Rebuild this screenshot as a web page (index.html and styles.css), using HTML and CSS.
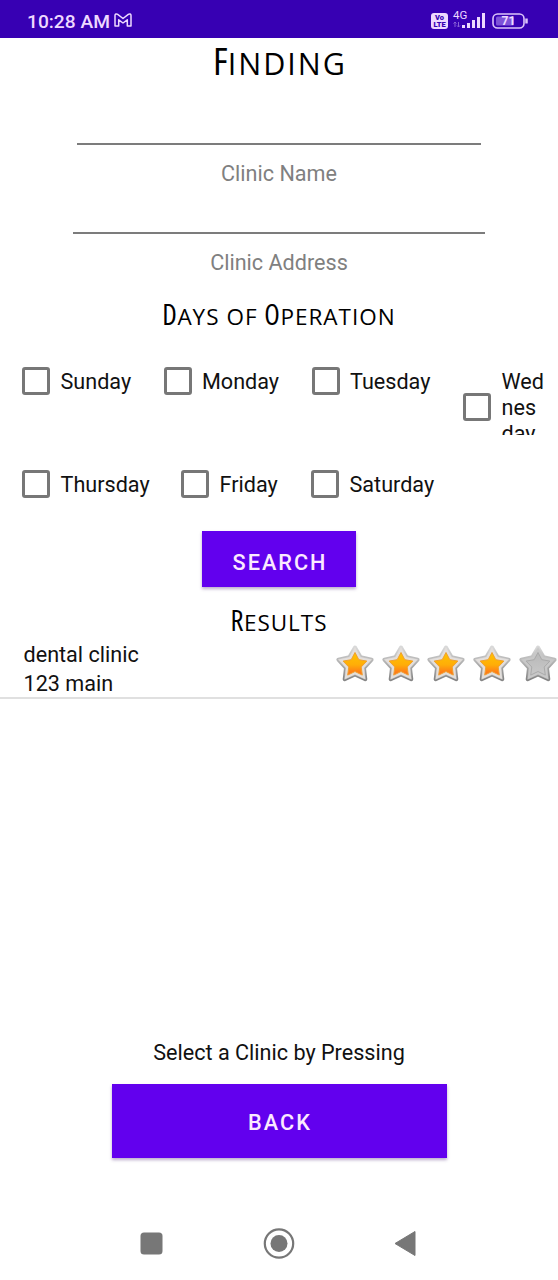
FILE: index.html
```html
<!DOCTYPE html>
<html lang="en">
<head>
  <meta charset="UTF-8">
  <meta name="viewport" content="width=device-width, initial-scale=1.0">
  <title>Finding</title>
  <link rel="stylesheet" href="styles.css">
</head>
<body>

  <div class="status-bar">
    <span class="time">10:28 AM</span>
    <svg class="mail-icon" width="20" height="16" viewBox="0 0 20 16">
      <path d="M2 14V3.500C2 2 3.500 1.500 4.700 2.400L10 6.500L15.300 2.400C16.500 1.500 18 2 18 3.500V14H14.300V7.800L10 11L5.700 7.800V14Z" fill="none" stroke="#eed9ff" stroke-width="1.5" stroke-linejoin="round"/>
    </svg>
    <div class="status-right">
      <div class="volte"><span>Vo</span><span>LTE</span></div>
      <div class="signal">
        <span class="network">4G</span>
        <svg width="33" height="18" viewBox="0 0 33 18">
          <path d="M2 16V11M0.500 12.500L2 11L3.500 12.500M5.500 11V16M4 14.500L5.500 16L7 14.500" stroke="#8a62d8" fill="none"/>
          <path d="M10.500 17v-3M15.500 17v-5M20.500 17v-8M25.500 17v-11M30.500 17v-15" stroke="#eed9ff" stroke-width="3"/>
        </svg>
      </div>
      <svg class="battery" width="37" height="16" viewBox="0 0 37 16">
        <rect x="1" y="1" width="31" height="14" rx="4.500" fill="none" stroke="#dcc4fa" stroke-width="1.6"/>
        <rect x="4" y="3.500" width="18" height="9" rx="1.500" fill="#7e52d8"/>
        <path d="M34.500 5.500v5" stroke="#dcc4fa" stroke-width="2.500"/>
        <text x="16.500" y="12.300" text-anchor="middle" class="battery-text">71</text>
      </svg>
    </div>
  </div>

  <h1><span class="cap">F</span>inding</h1>

  <div class="field field-name"></div>
  <p class="field-label">Clinic Name</p>
  <div class="field field-address"></div>
  <p class="field-label">Clinic Address</p>

  <h2 class="days-title"><span class="cap">D</span>ays of <span class="cap">O</span>peration</h2>

  <div class="days">
    <label class="day sunday"><i class="box"></i><span>Sunday</span></label>
    <label class="day monday"><i class="box"></i><span>Monday</span></label>
    <label class="day tuesday"><i class="box"></i><span>Tuesday</span></label>
    <label class="day wednesday"><i class="box"></i><span>Wed<br>nes<br>day</span></label>
  </div>
  <div class="days days-second">
    <label class="day thursday"><i class="box"></i><span>Thursday</span></label>
    <label class="day friday"><i class="box"></i><span>Friday</span></label>
    <label class="day saturday"><i class="box"></i><span>Saturday</span></label>
  </div>

  <button class="btn btn-search">SEARCH</button>

  <h2 class="results-title"><span class="cap">R</span>esults</h2>

  <div class="result">
    <div class="result-text">
      <p>dental clinic</p>
      <p>123 main</p>
    </div>
    <div class="rating" id="rating"></div>
  </div>

  <div class="list-space"></div>

  <p class="hint">Select a Clinic by Pressing</p>
  <button class="btn btn-back">BACK</button>

  <div class="nav-bar">
    <svg width="280" height="34" viewBox="0 0 280 34">
      <rect x="1.500" y="5.500" width="22" height="22" rx="3.500" fill="#777"/>
      <circle cx="140" cy="16.500" r="14.200" fill="none" stroke="#777" stroke-width="2.200"/>
      <circle cx="140" cy="16.500" r="8.500" fill="#777"/>
      <path d="M256 16.500L276 4.500V28.500Z" fill="#777" stroke="#777" stroke-width="1" stroke-linejoin="round"/>
    </svg>
  </div>

  <svg width="0" height="0" class="defs">
    <defs>
      <linearGradient id="rim" x1="0" y1="0" x2="0" y2="1">
        <stop offset="0" stop-color="#d8d8d8"/>
        <stop offset="1" stop-color="#858585"/>
      </linearGradient>
      <linearGradient id="gold" x1="0" y1="0" x2="0" y2="1">
        <stop offset="0" stop-color="#ffc400"/>
        <stop offset="0.550" stop-color="#ffad08"/>
        <stop offset="1" stop-color="#ff6a1c"/>
      </linearGradient>
      <linearGradient id="grey" x1="0" y1="0" x2="0" y2="1">
        <stop offset="0" stop-color="#b8b8b8"/>
        <stop offset="1" stop-color="#c8c8c8"/>
      </linearGradient>
    </defs>
  </svg>

  <script>
    const score = 4;
    const star = 'M20 3.5L25.6 13.3L36.6 15.6L29 23.9L30.3 35.2L20 30.5L9.7 35.2L11 23.9L3.4 15.6L14.4 13.3Z';
    const inner = 'M20 8.5L23.8 15.7L31.9 17.1L26.2 23L27.3 31.1L20 27.5L12.7 31.1L13.8 23L8.1 17.1L16.2 15.7Z';
    let html = '';

    for (let i = 0; i < 5; i++) {
      const on = i < score;
      html += `
        <svg viewBox="0 0 40 40">
          <path d="${star}" fill="url(#rim)" stroke="url(#rim)" stroke-width="4" stroke-linejoin="round"/>
          <path d="${star}" fill="${on ? '#e3dfdc' : '#c8c8c8'}" stroke="${on ? '#e3dfdc' : '#c8c8c8'}" stroke-width="0.5" stroke-linejoin="round"/>
          <path d="${inner}" fill="url(#${on ? 'gold' : 'grey'})" stroke="${on ? '#f0a030' : '#aaa'}" stroke-width="1" stroke-linejoin="round"/>
        </svg>`;
    }
    document.getElementById('rating').innerHTML = html;
  </script>

</body>
</html>
```

FILE: styles.css
```css
* {
  box-sizing: border-box;
}

body {
  margin: 0;
  width: 558px;
  height: 1280px;
  display: flex;
  flex-direction: column;
  align-items: center;
  overflow: hidden;
  background-color: #fff;
  color: #111;
  font-family: Roboto, "Liberation Sans", sans-serif;
  font-size: 21.6px;
}

h1, h2, p {
  margin: 0;
  flex-shrink: 0;
  font-weight: normal;
}

/* status bar */
.status-bar {
  width: 100%;
  height: 38px;
  flex-shrink: 0;
  display: flex;
  align-items: center;
  padding: 5px 29px 0 27px;
  background-color: #3700b3;
  color: #eed9ff;
}

.time {
  font-size: 19.2px;
  font-weight: 500;
  line-height: 24px;
}

.mail-icon {
  margin: -3px 0 0 3px;
}

.status-right {
  display: flex;
  align-items: center;
  margin-left: auto;
  margin-top: -2px;
}

.volte {
  width: 17px;
  height: 16px;
  border-radius: 3px;
  background-color: #eed9ff;
  color: #3700b3;
  display: flex;
  flex-direction: column;
  align-items: center;
  justify-content: center;
  font-size: 7.5px;
  font-weight: 900;
  line-height: 7px;
}

.signal {
  position: relative;
  width: 33px;
  height: 18px;
  margin: -1px 6px 0 5px;
}

.network {
  position: absolute;
  left: 0;
  top: -1px;
  font-size: 11.5px;
  line-height: 11px;
}

.signal svg {
  display: block;
}

.battery-text {
  font-size: 12px;
  font-weight: 700;
  fill: #eed9ff;
}

/* headings */
h1, h2 {
  font-family: "Open Sans", "Noto Sans", sans-serif;
  font-stretch: 88%;
  text-transform: uppercase;
  white-space: nowrap;
  color: #000;
}

h1 {
  height: 105px;
  font-size: 30.5px;
  line-height: 43px;
  letter-spacing: 2px;
  padding-left: 2px;
}

h1 .cap {
  font-size: 39px;
  font-stretch: 75%;
  letter-spacing: 0;
}

h2 {
  font-size: 22.5px;
  line-height: 37px;
  letter-spacing: 1px;
}

h2 .cap {
  font-size: 28.5px;
  font-stretch: 78%;
  letter-spacing: 0.5px;
}

/* form */
.field {
  height: 2px;
  flex-shrink: 0;
  background-color: #7c7c7c;
}

.field-name {
  width: 404px;
}

.field-address {
  width: 412px;
}

.field-label {
  height: 87px;
  padding-top: 12px;
  line-height: 33px;
  color: #808080;
}

.field-address + .field-label {
  height: 62px;
}

.days-title {
  height: 70px;
}

.days {
  width: 558px;
  height: 69px;
  flex-shrink: 0;
  display: flex;
  align-items: flex-start;
  padding-left: 22px;
  overflow: hidden;
}

.day {
  display: flex;
  align-items: center;
  line-height: 26px;
  padding-top: 1px;
}

.day span {
  padding-top: 2px;
}

.box {
  width: 28px;
  height: 28px;
  margin-right: 10.5px;
  border: 3px solid #777;
  border-radius: 3px;
}

.sunday {
  width: 141.5px;
}

.monday {
  width: 148px;
}

.tuesday {
  width: 151.5px;
}

.days-second {
  margin-top: 34px;
  height: 62px;
}

.thursday {
  width: 159px;
}

.friday {
  width: 130px;
}

.btn {
  flex-shrink: 0;
  border: none;
  background-color: #6200ee;
  color: #fbe9ff;
  font-family: inherit;
  font-size: 21.7px;
  font-weight: 500;
  letter-spacing: 2px;
  padding: 6px 0 0 2px;
  box-shadow: 0 2px 3px rgba(60, 20, 110, 0.35);
}

.btn-search {
  width: 154px;
  height: 56px;
}

.results-title {
  height: 52px;
  padding-top: 15px;
}

/* results list */
.result {
  width: 100%;
  height: 60px;
  flex-shrink: 0;
  display: flex;
  justify-content: space-between;
  border-bottom: 2px solid #e0e0e0;
}

.result-text {
  padding: 1px 0 0 23.5px;
  line-height: 29px;
}

.rating {
  display: flex;
  gap: 5.800px;
  padding-top: 5px;
}

.rating svg {
  width: 40px;
  height: 40px;
}

.list-space {
  flex: 1;
}

.hint {
  line-height: 32px;
  margin-bottom: 15px;
}

.btn-back {
  width: 335px;
  height: 74px;
  padding-top: 2px;
}

.nav-bar {
  height: 122px;
  flex-shrink: 0;
  padding-top: 69px;
}

.defs {
  position: absolute;
}
```
